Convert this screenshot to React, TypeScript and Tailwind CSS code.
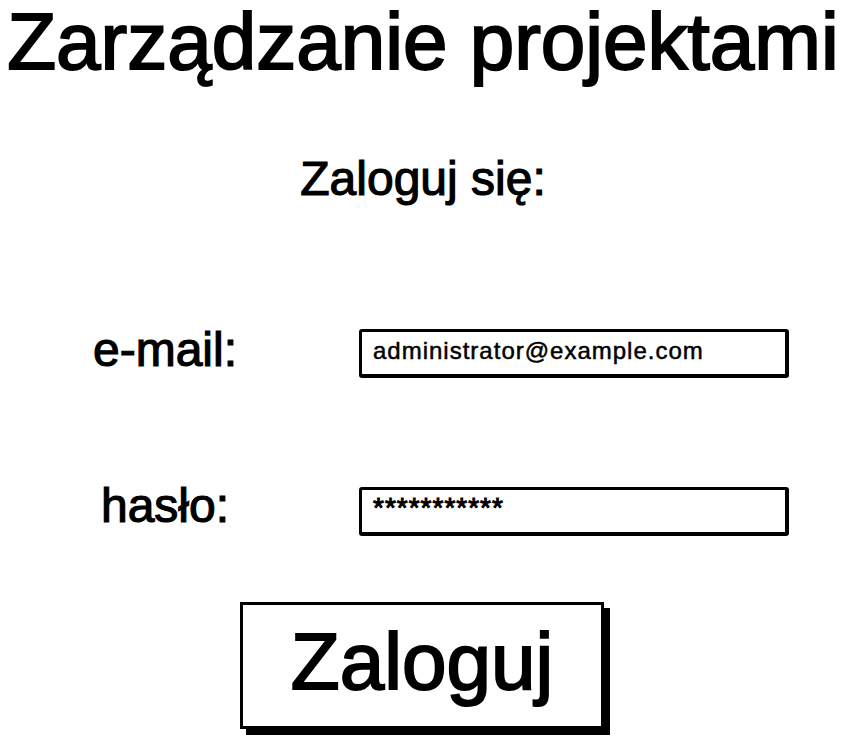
import React from 'react';

const font = { fontFamily: '"Liberation Sans", Arial, sans-serif' };

const Field: React.FC<{ label: string; value: string; secret?: boolean; className?: string; inputTop: string }> = ({
  label,
  value,
  secret,
  className,
  inputTop,
}) => (
  <div className={`flex items-start ${className ?? ''}`}>
    <div className="w-[330px] text-center text-[48px] leading-none [-webkit-text-stroke:1.2px_black]">{label}</div>
    <div
      className={`ml-[29px] h-[49px] w-[430px] rounded-[3px] border-[3px] border-r-4 border-b-4 border-black bg-white pl-[11px] ${inputTop} ${
        secret ? 'pt-[4px] text-[28px] tracking-[1px] [-webkit-text-stroke:1px_black]' : 'pt-[7px] text-[24px] tracking-[1px] [-webkit-text-stroke:0.5px_black]'
      } leading-none`}
    >
      {value}
    </div>
  </div>
);

export default function App() {
  return (
    <div className="w-[846px] h-[738px] overflow-hidden bg-white text-black" style={font}>
      <h1 className="-mt-[4px] whitespace-nowrap text-center text-[80px] leading-[92px] [-webkit-text-stroke:2px_black]">
        Zarządzanie projektami
      </h1>
      <h2 className="mt-[67px] text-center text-[48px] leading-none [-webkit-text-stroke:1.2px_black]">Zaloguj się:</h2>

      <Field className="mt-[123px]" inputTop="mt-[3px]" label="e-mail:" value="administrator@example.com" />
      <Field className="mt-[104px]" inputTop="mt-[5px]" label="hasło:" value="***********" secret />

      <div className="mt-[66px] flex justify-center">
        <button className="h-[127px] w-[364px] -translate-x-px border-[3px] border-black bg-white pt-[17px] text-[80px] leading-none shadow-[6px_6px_0_#000] flex justify-center items-start [-webkit-text-stroke:2px_black]">
          Zaloguj
        </button>
      </div>
    </div>
  );
}
